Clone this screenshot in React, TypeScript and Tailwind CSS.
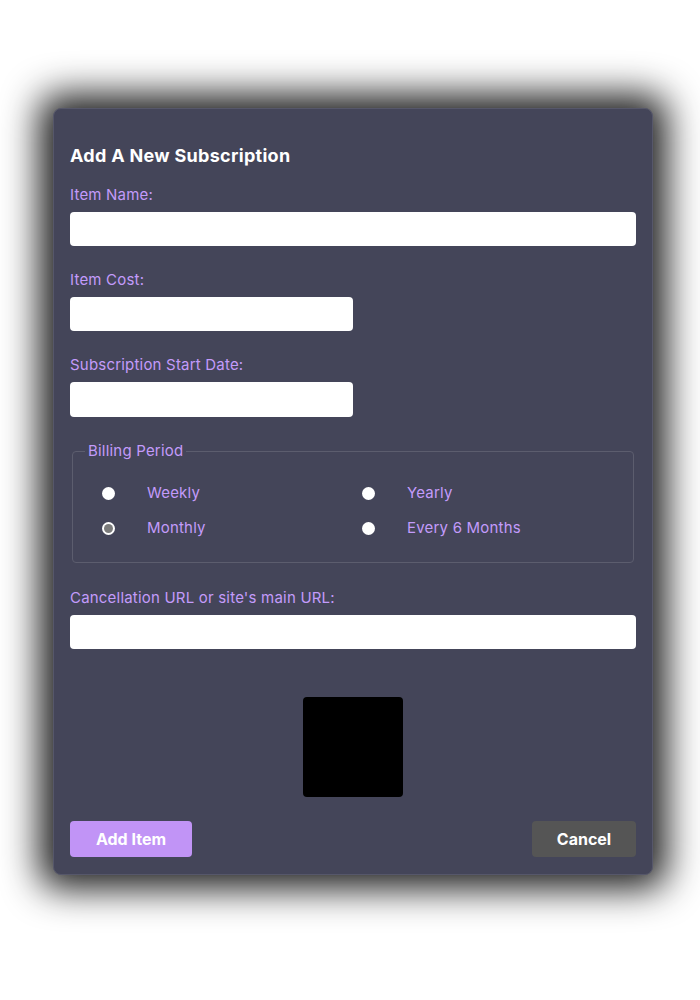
import { useState } from 'react';

const periods = [
    { id: 'weekly', label: 'Weekly' },
    { id: 'yearly', label: 'Yearly' },
    { id: 'monthly', label: 'Monthly' },
    { id: 'six', label: 'Every 6 Months' },
];

function Field({ label, wide, tall, className }: { label: string; wide?: boolean; tall?: boolean; className?: string }) {
    return (
        <label className={`flex flex-col ${className ?? ''}`}>
            <span className="pt-[1px] text-[15px] leading-[20px] tracking-[0.2px] text-[#c39bfb]">{label}</span>
            <input
                type="text"
                className={`mt-[7px] rounded-[4px] bg-white px-2 text-black outline-none ${tall ? 'h-[35px]' : 'h-[34px]'} ${wide ? 'w-full' : 'w-[283px]'}`}
            />
        </label>
    );
}

export default function App() {
    const [period, setPeriod] = useState('monthly');

    return (
        <main className="min-h-[1000px] bg-white pt-[108px] font-['Inter','Noto_Sans',sans-serif]">
            <div className="ml-[53px] w-[600px] rounded-[8px] border border-[#56576a] bg-[#444559] px-[16px] pt-[35px] pb-[17px] shadow-[0_0_36px_14px_rgba(0,0,0,0.88)]">
                <h2 className="text-[18px] font-bold leading-[24px] tracking-[0.3px] text-white">Add A New Subscription</h2>

                <Field label="Item Name:" wide className="mt-[16px]" />
                <Field label="Item Cost:" className="mt-[23px]" />
                <Field label="Subscription Start Date:" tall className="mt-[23px]" />

                <fieldset className="mx-[2px] mt-[24px] rounded-[4px] border border-[#5c5d6e] pb-[24px]">
                    <legend className="ml-[12px] px-[3px] text-[15px] leading-[20px] tracking-[0.2px] text-[#c39bfb]">Billing Period</legend>
                    <div className="grid grid-cols-[260px_1fr] gap-y-[15px] pt-[22px] pl-[29px]">
                        {periods.map((p) => (
                            <button
                                key={p.id}
                                type="button"
                                onClick={() => setPeriod(p.id)}
                                className="flex h-[20px] items-center text-left"
                            >
                                {period === p.id ? (
                                    <span className="flex h-[13px] w-[13px] items-center justify-center rounded-full bg-white">
                                        <span className="h-[9px] w-[9px] rounded-full bg-[#7b7b7b]" />
                                    </span>
                                ) : (
                                    <span className="h-[13px] w-[13px] rounded-full bg-white" />
                                )}
                                <span className="ml-[32px] text-[15px] leading-[20px] tracking-[0.2px] text-[#c39bfb]">{p.label}</span>
                            </button>
                        ))}
                    </div>
                </fieldset>

                <Field label="Cancellation URL or site's main URL:" wide className="mt-[24px]" />

                <div className="mt-[48px] flex justify-center">
                    <div className="h-[100px] w-[100px] rounded-[4px] bg-black" />
                </div>

                <div className="mt-[24px] flex items-center justify-between">
                    <button type="button" className="h-[36px] w-[122px] rounded-[4px] bg-[#c194f6] text-[16px] font-bold text-white">
                        Add Item
                    </button>
                    <button type="button" className="h-[36px] w-[104px] rounded-[4px] bg-[#555555] text-[16px] font-bold text-white">
                        Cancel
                    </button>
                </div>
            </div>
        </main>
    );
}
